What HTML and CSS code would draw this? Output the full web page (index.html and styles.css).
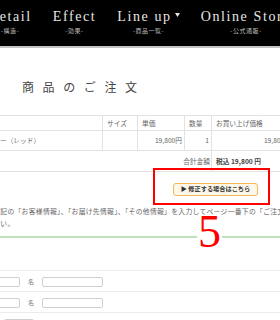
FILE: index.html
```html
<!DOCTYPE html>
<html lang="ja">
<head>
<meta charset="utf-8">
<title>商品のご注文</title>
<link rel="stylesheet" href="styles.css">
</head>
<body>
<header class="gnav">
  <ul class="gnav-list">
    <li class="gnav-item"><span class="gnav-en">Detail</span><span class="gnav-ja">-構造-</span></li>
    <li class="gnav-item"><span class="gnav-en">Effect</span><span class="gnav-ja">-効果-</span></li>
    <li class="gnav-item"><span class="gnav-en">Line up<svg class="gnav-caret" width="5" height="4" viewBox="0 0 5 4"><path d="M0 0H5L2.5 4Z" fill="#e6e6e6"/></svg></span><span class="gnav-ja">-商品一覧-</span></li>
    <li class="gnav-item"><span class="gnav-en">Online Store</span><span class="gnav-ja">-公式通販-</span></li>
  </ul>
</header>
<main class="page">
  <h1 class="title">商品のご注文</h1>
  <table class="cart">
    <colgroup>
      <col class="c-name"><col class="c-size"><col class="c-price"><col class="c-qty"><col class="c-sub">
    </colgroup>
    <tr class="cart-head">
      <th></th><th>サイズ</th><th>単価</th><th>数量</th><th>お買い上げ価格</th>
    </tr>
    <tr class="cart-row">
      <td class="name">ー（レッド）</td><td></td><td class="num">19,800円</td><td class="num">1</td><td class="num">19,800円</td>
    </tr>
    <tr class="cart-total">
      <td colspan="4" class="num total-label">合計金額</td><td class="total-val">税込 19,800 円</td>
    </tr>
  </table>
  <div class="edit-row">
    <a class="edit-btn" href="#">▶&nbsp;修正する場合はこちら</a>
  </div>
  <p class="lead">下記の「お客様情報」、「お届け先情報」、「その他情報」を入力してページ一番下の「ご注文内容の確認」ボタンを押してくだ<br>さい。</p>
  <div class="green-rule"></div>
  <div class="form">
    <div class="form-row">
      <span class="field field-first"></span><span class="lbl">名</span><span class="field"></span>
    </div>
    <div class="form-row">
      <span class="field field-first"></span><span class="lbl">名</span><span class="field"></span>
    </div>
    <div class="form-row">
      <span class="field field-zip"></span><span class="lbl">（半角数字）</span>
    </div>
  </div>
  <div class="annot-box"></div>
  <div class="annot-num">5</div>
</main>
</body>
</html>
```
FILE: styles.css
```css
html, body {
  margin: 0;
  padding: 0;
  overflow: hidden;
  background: #fff;
}
body {
  width: 280px;
  height: 320px;
  position: relative;
  font-family: "Noto Sans CJK JP", "Noto Sans", sans-serif;
  color: #555;
}

/* global nav */
.gnav {
  height: 46px;
  background: #000;
  border-bottom: 2px solid #c4c4c4;
}
.gnav-list {
  display: flex;
  gap: 21px;
  margin: 0 0 0 -12px;
  padding: 9px 0 0;
  list-style: none;
  white-space: nowrap;
}
.gnav-item {
  display: flex;
  flex-direction: column;
  align-items: center;
  gap: 2px;
}
.gnav-en {
  font-family: "Liberation Serif", serif;
  font-size: 14px;
  line-height: 16px;
  letter-spacing: 1.6px;
  color: #e6e6e6;
  display: flex;
  align-items: center;
}
.gnav-caret {
  margin-left: 3px;
  margin-top: -4px;
}
.gnav-ja {
  font-size: 6px;
  line-height: 8px;
  color: #bdbdbd;
  letter-spacing: 0.5px;
}

/* title */
.title {
  margin: 31px 0 0 22px;
  font-size: 12px;
  line-height: 16px;
  font-weight: normal;
  letter-spacing: 8.6px;
  color: #444;
}

/* cart table */
.cart {
  margin-top: 20px;
  width: 294px;
  table-layout: fixed;
  border-collapse: separate;
  border-spacing: 0;
  border-top: 1px solid #e2e2e2;
  font-size: 6.7px;
  color: #666;
}
.c-name { width: 103px; }
.c-size { width: 35px; }
.c-price { width: 47px; }
.c-qty { width: 27px; }
.c-sub { width: 82px; }
.cart th, .cart td {
  padding: 0 3px;
  border-bottom: 1px solid #e2e2e2;
  border-right: 1px solid #e2e2e2;
  text-align: left;
  font-weight: normal;
  white-space: nowrap;
  overflow: hidden;
}
.cart th:first-child, .cart td.name { padding-left: 0; }
.cart-head th { line-height: 14px; height: 14px; padding-left: 4px; }
.cart-row td { line-height: 19px; height: 19px; }
.cart-total td { line-height: 20px; height: 20px; }
.cart td.num { text-align: right; padding-right: 2px; }
.cart td.total-label { padding-right: 1px; }
.cart td.total-val {
  padding-left: 4px;
  font-weight: bold;
  color: #444;
}

/* edit button */
.edit-row {
  display: flex;
  justify-content: flex-end;
  padding: 11px 22px 0 0;
}
.edit-btn {
  box-sizing: border-box;
  width: 85px;
  height: 13px;
  border: 1.5px solid #f0b85a;
  border-radius: 3px;
  background: #fdf7ea;
  color: #333;
  font-size: 6.2px;
  font-weight: bold;
  line-height: 10px;
  text-align: center;
  text-decoration: none;
  white-space: nowrap;
}

/* lead text */
.lead {
  margin: 9px 0 0 -6.8px;
  font-size: 6.8px;
  letter-spacing: 0.3px;
  line-height: 12px;
  color: #666;
  white-space: nowrap;
}
.green-rule {
  margin-top: 7px;
  height: 2px;
  background: #c0e0b9;
}

/* form */
.form {
  margin-top: 32px;
}
.form-row {
  display: flex;
  align-items: center;
  gap: 8px;
  height: 10px;
  padding: 6px 0 4px;
  border-top: 1px solid #ebebeb;
}
.field {
  box-sizing: border-box;
  width: 61px;
  height: 10px;
  border: 1px solid #cfcfcf;
  border-radius: 2px;
  background: #fff;
  flex: none;
}
.field-first { margin-left: -41px; }
.field-zip { width: 30px; margin-left: 4px; }
.lbl {
  font-size: 6px;
  line-height: 8px;
  color: #777;
}

/* annotation overlays */
.annot-box {
  position: absolute;
  left: 153px;
  top: 168px;
  width: 117px;
  height: 37px;
  box-sizing: border-box;
  border: 2px solid #f00;
}
.annot-num {
  position: absolute;
  left: 197px;
  top: 225px;
  height: 13px;
  padding: 0 1px;
  line-height: 13px;
  font-family: "Liberation Serif", serif;
  font-size: 46px;
  color: #f00;
  background: #fff;
}
```
